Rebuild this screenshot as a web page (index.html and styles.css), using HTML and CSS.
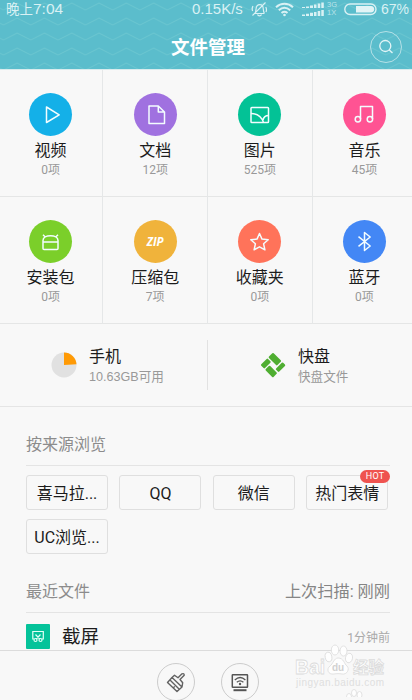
FILE: index.html
```html
<!DOCTYPE html>
<html lang="zh-CN">
<head>
<meta charset="utf-8">
<title>文件管理</title>
<link rel="stylesheet" href="styles.css">
</head>
<body>
<div class="phone">
  <header class="header">
    <svg class="waves" width="412" height="70" aria-hidden="true">
      <defs><pattern id="zig" x="3.5" y="1" width="27.3" height="15" patternUnits="userSpaceOnUse"><path d="M-1 8.500 L0 9 L13.65 2 L27.3 9 L28.3 8.500" fill="none" stroke="#75cbd2" stroke-width="1" stroke-opacity=".6"/></pattern></defs>
      <rect width="412" height="70" fill="url(#zig)"/>
    </svg>
    <div class="status">
      <span class="clock"><span class="clock-cn">晚上</span>7:04</span>
      <span class="speed">0.15K/s</span>
      <svg class="mute" width="18" height="17" viewBox="0 0 18 17" fill="none" stroke="#d9f1f4" stroke-width="1.2"><path d="M4 12.5h10.5M5 12.2c1.5-2 .4-5.4 2-7.3 1.400-1.600 4.200-1.600 5.500 0 1.300 1.700.3 5.200 1.800 7.300M7.500 13.500c.7 1.700 3.300 1.700 4 0M15.500 1.500l-13 13M3 5c-1 1.600-1 3.400-.4 5M15.800 6c.8 1.500.8 3.500.2 5"/></svg>
      <svg class="wifi" width="19" height="15" viewBox="0 0 19 15" fill="none" stroke="#d9f1f4" stroke-width="2"><path d="M1 5.200c5-4.500 12-4.500 17 0M3.800 8.200c3.500-3 7.900-3 11.400 0M6.500 11c2-1.600 4-1.600 6 0"/><circle cx="9.500" cy="13" r="1.300" fill="#d9f1f4" stroke="none"/></svg>
      <svg class="signal" width="23" height="15" viewBox="0 0 23 15" fill="#d9f1f4"><path d="M0 5h3v1H0zM4 4.500h3V6H4zM8 3.500h3V6H8zM12 2.500h2.500V6H12zM15.700 1.500h2.500V6h-2.500zM19.300 0.500h2.500V6h-2.500zM0 12.500h3V14H0zM4 11.800h3V14H4zM8 10.800h3V14H8zM12 10h2.500v4H12zM15.700 9h2.500v5h-2.500zM19.300 8h2.500v6h-2.500z"/></svg>
      <span class="net"><span>3G</span><span>1X</span></span>
      <svg class="battery" width="33" height="13" viewBox="0 0 33 13"><rect x=".8" y="1" width="31.200" height="10.500" rx="5.250" fill="none" stroke="#d9f1f4" stroke-width="1.400"/><path d="M12 3h15c4.300 0 4.300 6.500 0 6.500H12z" fill="#e2f4f6"/></svg>
      <span class="percent">67%</span>
    </div>
    <div class="titlebar">
      <h1>文件管理</h1>
      <button class="search" aria-label="搜索"><svg width="16" height="16" viewBox="0 0 16 16" fill="none" stroke="#e4f5f7" stroke-width="1.300"><circle cx="7.300" cy="7" r="5.500"/><path d="M11.300 11l3.200 3"/></svg></button>
    </div>
  </header>

  <section class="categories">
    <div class="cat"><span class="disc video"><svg viewBox="0 0 43 43"><path d="M17.500 14v15.500l12.700-7.700z"/></svg></span><b>视频</b><small>0项</small></div>
    <div class="cat"><span class="disc doc"><svg viewBox="0 0 43 43"><path d="M15 13h9.300l6.200 6v11.500H15zM24.300 13v6h6.200"/></svg></span><b>文档</b><small>12项</small></div>
    <div class="cat"><span class="disc image"><svg viewBox="0 0 43 43"><rect x="13" y="14.500" width="17.500" height="15" rx=".8"/><path d="M13 20.500c6.500 0 10.500 3 12.500 9M25 27c.8-3.300 2.500-4.500 5.500-4.500"/></svg></span><b>图片</b><small>525项</small></div>
    <div class="cat"><span class="disc music"><svg viewBox="0 0 43 43"><path d="M17.500 26V13.500h12V26"/><circle cx="14.900" cy="26.200" r="2.700"/><circle cx="26.900" cy="26.200" r="2.700"/></svg></span><b>音乐</b><small>45项</small></div>
    <div class="cat"><span class="disc apk"><svg viewBox="0 0 43 43"><path d="M14 22v6.500q0 1 1 1h13q1 0 1-1V22zM14 22v-1.500c0-6.500 15-6.500 15 0V22M16.300 17l-2.300-2.200M26.700 17l2.300-2.200"/></svg></span><b>安装包</b><small>0项</small></div>
    <div class="cat"><span class="disc zip">ZIP</span><b>压缩包</b><small>7项</small></div>
    <div class="cat"><span class="disc fav"><svg viewBox="0 0 43 43"><path d="M21.500 13.500l2.500 5.600 6.200.7-4.600 4 1.300 6-5.400-3-5.400 3 1.300-6-4.600-4 6.200-.7z"/></svg></span><b>收藏夹</b><small>0项</small></div>
    <div class="cat"><span class="disc bt"><svg viewBox="0 0 43 43"><path d="M15.500 16.700l11.700 9.300-5.700 4.500v-18l5.700 4.500-11.700 9.300"/></svg></span><b>蓝牙</b><small>0项</small></div>
  </section>

  <section class="storage">
    <div class="store">
      <svg width="26" height="26" viewBox="0 0 26 26"><circle cx="13" cy="13" r="12.500" fill="#e1e1e1"/><path d="M13 13V.5A12.500 12.500 0 0 1 25.500 12.300z" fill="#ff9a05"/></svg>
      <div><b>手机</b><small>10.63GB可用</small></div>
    </div>
    <div class="store second">
      <svg width="26" height="26" viewBox="-13 -13 26 26" fill="#4fae31"><g transform="rotate(45)"><rect x="-8.800" y="-8.800" width="12" height="6.700" rx="1"/><rect x="4.600" y="-8.800" width="4.500" height="10" rx="1"/><rect x="-8.800" y="-.8" width="5.300" height="9.600" rx="1"/><rect x="-2.200" y="2.700" width="11" height="6.300" rx="1"/></g></svg>
      <div><b>快盘</b><small>快盘文件</small></div>
    </div>
  </section>

  <section class="sources">
    <h2>按来源浏览</h2>
    <div class="chips">
      <span class="chip">喜马拉...</span>
      <span class="chip">QQ</span>
      <span class="chip">微信</span>
      <span class="chip">热门表情<i class="hot">HOT</i></span>
      <span class="chip">UC浏览...</span>
    </div>
  </section>

  <section class="recent">
    <div class="recent-head"><h2>最近文件</h2><span>上次扫描: 刚刚</span></div>
    <div class="file">
      <svg width="24" height="25" viewBox="0 0 24 25"><rect width="24" height="25" rx="1" fill="#05c39a"/><g fill="none" stroke="#e4fff7" stroke-width="1.200"><path d="M8 15H6.800V7.500h10.500V15H16M9.500 10.500l4.300 4.500M14.500 10.500L10.200 15"/><circle cx="9.500" cy="16" r="1.500"/><circle cx="14.500" cy="16" r="1.500"/></g></svg>
      <b>截屏</b><small>1分钟前</small>
    </div>
  </section>

  <footer class="toolbar">
    <span class="tool"><svg width="38" height="38" viewBox="0 0 38 38" fill="none" stroke="#626262" stroke-width="1.400" stroke-linejoin="round"><path d="M10.500 19.500l4.500-5 10 9.500-5 4.500zM15 14.500l2.500-2.300 3.500 2.600 4-4q2.200-.8 2.200 1.400l-4.200 4.300 2.700 3.200-.7 4.300M13 17l9 9M16.300 25l1.400-1.600"/></svg></span>
    <span class="tool"><svg width="38" height="38" viewBox="0 0 38 38" fill="none" stroke="#555" stroke-width="1.500"><rect x="11.300" y="11.800" width="15.200" height="12.500" rx=".5"/><path d="M12.500 27.200h13" stroke-width="2"/><path d="M13.800 17c3.300-3 7.400-3 10.600 0M15.800 19.300c2-1.700 4.600-1.700 6.600 0" stroke-width="1.300"/><circle cx="19" cy="21" r="1.200" fill="#555" stroke="none"/></svg></span>
  </footer>

  <div class="watermark" aria-hidden="true">
    <svg width="96" height="59" viewBox="0 0 96 59">
      <g fill="#fff" stroke="#dadada" stroke-width=".8">
        <ellipse cx="33.500" cy="19" rx="3.300" ry="4.800" transform="rotate(-12 33.500 19)"/><ellipse cx="40" cy="12" rx="3.700" ry="5"/><ellipse cx="48.500" cy="13" rx="3.500" ry="5"/><ellipse cx="54" cy="20" rx="3.500" ry="4.800" transform="rotate(12 54 20)"/>
        <path d="M43 20c6 0 6 6 9 8 3 3 0 9-5 8-3-.5-5-.5-8 0-6 1-8-5-4-8 3-2 4-8 8-8z"/>
        <text class="wm-main" x="0" y="36" textLength="30" lengthAdjust="spacingAndGlyphs">Bai</text>
        <text class="wm-cn" x="58" y="35" textLength="31" lengthAdjust="spacingAndGlyphs">经验</text>
        <ellipse cx="54" cy="59" rx="2.500" ry="3.500"/><ellipse cx="59" cy="55" rx="2.500" ry="3.500"/><ellipse cx="64.500" cy="57" rx="2.500" ry="3.500"/>
      </g>
      <text class="wm-du" x="37" y="33">du</text>
      <text class="wm-url" x="1" y="48" textLength="88">jingyan.baidu.com</text>
    </svg>
  </div>
</div>
</body>
</html>
```
FILE: styles.css
```css
* { box-sizing: border-box; }
body { margin: 0; background: #f8f8f8; color: #1c1c1c; font-family: Roboto, "Noto Sans CJK SC", sans-serif; }
h1, h2 { margin: 0; font-weight: 400; }
b { font-weight: 400; }
.phone { position: relative; width: 412px; height: 700px; overflow: hidden; display: flex; flex-direction: column; }

.header { position: relative; height: 70px; flex: none; background: #5bbdcc; border-bottom: 1px solid #d9ecee; }
.waves { position: absolute; left: 0; top: 0; height: 69px; }
.status { position: relative; display: flex; align-items: center; height: 18px; padding: 0 2px 0 6px; color: #d9f1f4; font: 15px/18px "Liberation Sans", "Noto Sans CJK SC", sans-serif; white-space: nowrap; }
.clock { width: 186px; font-size: 15.5px; }
.clock-cn { font-size: 13.5px; }
.speed { width: 52px; }
.mute { margin-left: 6px; }
.wifi { margin-left: 7px; }
.signal { margin-left: 8px; }
.net { display: flex; flex-direction: column; font-size: 7.5px; line-height: 8px; width: 12px; margin-left: 2px; opacity: .75; }
.battery { margin-left: 5px; }
.percent { margin-left: 4px; font-size: 14px; }
.titlebar { position: relative; display: flex; align-items: center; justify-content: center; height: 59px; }
.titlebar h1 { color: #fff; font-size: 18.5px; font-weight: 700; line-height: 26px; padding-left: 4px; }
.search { position: absolute; right: 10px; top: 13px; width: 32px; height: 32px; padding: 0; display: flex; align-items: center; justify-content: center; border: 1px solid #b5e1e7; border-radius: 50%; background: none; }

.categories { flex: none; display: grid; grid-template-columns: repeat(4, 104.6px); grid-auto-rows: 127px; width: 419px; margin-left: -1.2px; }
.cat { display: flex; flex-direction: column; align-items: center; padding-top: 23px; border-right: 1px solid #e5e7e8; border-bottom: 1px solid #e5e6e6; }
.disc { width: 43px; height: 43px; border-radius: 50%; display: flex; align-items: center; justify-content: center; color: #fff; }
.disc svg { width: 43px; height: 43px; fill: none; stroke: #f3fdff; stroke-width: 1.5; stroke-linejoin: round; }
.video { background: #14b0e8; }
.doc { background: #a071e0; }
.image { background: #03c296; }
.music { background: #ff5393; }
.apk { background: #7bcf2a; }
.zip { background: #f0b33b; font: italic 700 11.5px/1 "Open Sans", sans-serif; }
.fav { background: #ff735a; }
.bt { background: #4387f5; }
.cat b { font-size: 16px; line-height: 20px; margin-top: 5px; }
.cat small { font-size: 12px; line-height: 16px; margin-top: 1px; color: #999; }
.cat:nth-child(n+5) b { margin-top: 5px; }

.storage { flex: none; display: grid; grid-template-columns: 207px 205px; height: 83px; border-bottom: 1px solid #e5e5e5; align-items: center; }
.store { display: flex; align-items: center; height: 50px; padding-left: 51px; gap: 12px; }
.second { padding-left: 52px; border-left: 1px solid #e2e2e2; }
.store div { display: flex; flex-direction: column; padding-top: 2px; }
.store b { font-size: 16px; line-height: 21px; }
.store small { font: 12.6px/20px "Liberation Sans", "Noto Sans CJK SC", sans-serif; color: #999; }

.sources { flex: none; height: 154px; padding: 22px 22px 0 26px; }
h2 { font-size: 16px; line-height: 32px; color: #8c8c8c; }
.sources h2 { height: 37px; border-bottom: 1px solid #e4e4e4; }
.chips { display: grid; grid-template-columns: repeat(4, 82px); column-gap: 11.4px; row-gap: 9px; padding-top: 9px; }
.chip { position: relative; display: flex; align-items: center; justify-content: center; height: 35px; padding-top: 2px; border: 1px solid #dfdfdf; border-radius: 3px; font-size: 16px; line-height: 20px; white-space: nowrap; }
.hot { position: absolute; right: -3px; top: -6px; width: 30px; height: 13px; border-radius: 7px; background: #ef5350; color: #fff; font: 9px/13px Roboto, sans-serif; letter-spacing: .3px; text-align: center; }

.recent { flex: none; height: 89px; padding: 15px 22px 0 26px; overflow: hidden; }
.recent-head { display: flex; justify-content: space-between; height: 37px; border-bottom: 1px solid #e4e4e4; color: #858585; font-size: 16.2px; line-height: 32px; }
.file { display: flex; align-items: center; height: 47px; }
.file svg { margin-bottom: 1px; }
.file b { margin-left: 12px; font-size: 18.5px; line-height: 26px; }
.file small { margin-left: auto; font-size: 12px; color: #aaa; }

.toolbar { flex: none; display: flex; justify-content: center; gap: 26px; height: 50px; padding: 12px 0 0 4px; border-top: 1px solid #dcdcdc; background: #f8f8f8; }
.tool { width: 38px; height: 38px; border: 1px solid #ccc; border-radius: 50%; display: flex; align-items: center; justify-content: center; flex: none; }
.tool svg { flex: none; }
.watermark { position: absolute; left: 295px; top: 638px; width: 96px; height: 59px; opacity: .95; }
.wm-main { font: 700 21px "Liberation Sans", sans-serif; }
.wm-cn { font: 700 16px "Noto Sans CJK SC", sans-serif; }
.wm-du { font: 700 10px "Liberation Sans", sans-serif; fill: #d0d0d0; }
.wm-url { font: 10px "Liberation Sans", sans-serif; fill: #dedede; }
```
